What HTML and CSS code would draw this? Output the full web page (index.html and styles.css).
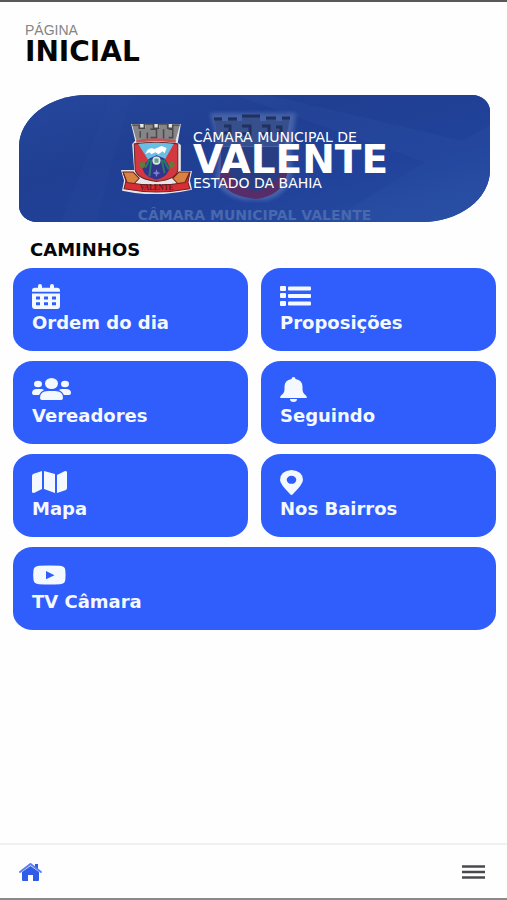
FILE: index.html
```html
<!DOCTYPE html>
<html lang="pt-BR">
<head>
<meta charset="utf-8">
<meta name="viewport" content="width=device-width, initial-scale=1">
<title>Câmara Municipal de Valente</title>
<link rel="stylesheet" href="styles.css">
</head>
<body>
<header class="page-head">
  <p class="eyebrow">PÁGINA</p>
  <h1 class="title">INICIAL</h1>
</header>
<main class="content">
  <section class="banner">
    <svg class="banner-art" viewBox="0 0 471 127" preserveAspectRatio="xMidYMid slice" aria-hidden="true">
      <defs>
        <linearGradient id="shade" x1="0" y1="0" x2="1" y2="1">
          <stop offset="0" stop-color="#25479c"/><stop offset=".35" stop-color="#203f92"/>
          <stop offset=".65" stop-color="#21429a"/><stop offset="1" stop-color="#284fa4"/>
        </linearGradient>
        <filter id="soft" x="-20%" y="-20%" width="140%" height="140%"><feGaussianBlur stdDeviation="2"/></filter>
      </defs>
      <rect width="471" height="127" fill="url(#shade)"/>
      <path d="M92 0 42 127H78L112 0z" fill="#3155a7" opacity=".12"/>
      <path d="M250 0 471 52V90L215 0zM310 127 400 70 471 30V127z" fill="#3b63b4" opacity=".12"/>
      <path d="M191 18h86l-5 35 1 24q-3 22-25 28h-22q-24-4-29-21l3-31z" fill="#8da4d5" opacity=".35" filter="url(#soft)"/>
      <path d="M195 22h8v4h6v-4h9v4h5v-6h18v6h6v-4h10v4h6v-4h8l-5 29h-66z" fill="#37508d"/>
      <path d="M195 24h8m6 0h9m5-3h18m6 2h10m6 0h8M205 31h6v7h-6m18-7h8v8h-8m20-8h7v8h-7m14-7h5v6h-5" fill="none" stroke="#1f315f" stroke-width="3"/>
      <path d="M202 52h66v27q-6 19-32 23-26-4-34-23z" fill="#293d83"/>
      <path d="M202 64q13 29 35 32 26-3 31-41v24q-5 22-31 25-29-3-36-19z" fill="#562d68"/>
    </svg>
    <div class="brand">
      <svg class="crest" viewBox="1 2 71 68" preserveAspectRatio="none" role="img" aria-label="Brasão de Valente">
        <path d="M11 3 60 3 57 21 60 23V48H71L69 57 71 66Q36 74 2 67L4 57 1 47H14L12 22 15 19z" fill="#e8e5e9"/>
        <path d="M12 4h8v3h5V3h9v4h5V3h9v4h4V4h7l-4 14H16z" fill="#858487"/>
        <path d="M12 4h7v3h5V3h9v4h5V3h9v4h5V4h7M20 10v6m7-5v6m3-9h6v8h-6m13-8v9m5-9h4v8h-4" fill="none" stroke="#4b494c" stroke-width="1.5"/>
        <path d="M16 18q20-3 39 0v3q-19-3-39 0z" fill="#c55355"/>
        <path d="M14 22q22-3 43 0v25q-1 9-21 11-19-2-21-11z" fill="#d3373f" stroke="#60292c"/>
        <path d="M18 22q18-2 35 0L43 39H29z" fill="#69bee3"/>
        <path d="M27 28q3-3 7-1l7-3 5 2-2 5-2-2-4 3-3-2-4 2-2-2-4 2z" fill="#fff"/>
        <path d="m29 36 7-3 8 3 5 8q-1 10-13 12-13-2-14-12z" fill="#31368c"/>
        <path d="m29 37-4 8m6-8-2 16m14-16 5 9m-7-9 3 13" stroke="#277a67" stroke-width="2"/>
        <circle cx="36" cy="38" r="4" fill="#d4eee0"/><path d="M34 36h4v4h-4z" fill="#6a9f8d"/>
        <circle cx="22" cy="42" r="3" fill="#64793c"/><circle cx="51" cy="42" r="3" fill="#64793c"/>
        <path d="m36 46 1 3 3 1-3 1-1 3-1-3-3-1 3-1z" fill="#7c7fce"/>
        <path d="M3 49h10l6 6-5 5H7zM69 49H58l-6 6 5 5h7z" fill="#d88440" stroke="#672323"/>
        <path d="M3 49 7 59Q36 64 64 59L69 49 67 59 69 65Q36 71 4 65L6 57z" fill="#d72d35" stroke="#722124"/>
        <text class="crest-name" x="36" y="66" text-anchor="middle">VALENTE</text>
      </svg>
      <div class="brand-text">
        <p class="brand-line">CÂMARA MUNICIPAL DE</p>
        <p class="brand-name">VALENTE</p>
        <p class="brand-line">ESTADO DA BAHIA</p>
      </div>
    </div>
    <p class="banner-caption">CÂMARA MUNICIPAL VALENTE</p>
  </section>
  <h2 class="section-title">CAMINHOS</h2>
  <nav class="tiles" aria-label="Caminhos">
    <a class="tile" href="#ordem">
      <span class="tile-icon"><svg width="28" height="25" viewBox="0 0 28 26" preserveAspectRatio="none"><path fill-rule="evenodd" d="M8 0q2 0 2 2v2h8V2q0-2 2-2t2 2v2h3q3 0 3 3v1H0V7q0-3 3-3h3V2q0-2 2-2zM0 10h28v13q0 3-3 3H3q-3 0-3-3zm4 3v3h4v-3zm8 0v3h4v-3zm8 0v3h4v-3zM4 19v3h4v-3zm8 0v3h4v-3zm8 0v3h4v-3z"/></svg></span>
      <span class="tile-label">Ordem do dia</span>
    </a>
    <a class="tile" href="#proposicoes">
      <span class="tile-icon"><svg width="31" height="22" viewBox="0 0 31 22"><rect y="1" width="6" height="5" rx="1"/><rect y="8" width="6" height="5" rx="1"/><rect y="16" width="6" height="5" rx="1"/><rect x="8" y="1.500" width="23" height="4" rx="1"/><rect x="8" y="9" width="23" height="4" rx="1"/><rect x="8" y="16.500" width="23" height="4" rx="1"/></svg></span>
      <span class="tile-label">Proposições</span>
    </a>
    <a class="tile" href="#vereadores">
      <span class="tile-icon"><svg width="39" height="22" viewBox="0 0 39 22"><ellipse cx="19.500" cy="5.500" rx="6.500" ry="5.500"/><ellipse cx="6" cy="6" rx="4" ry="3.300"/><ellipse cx="33" cy="6" rx="4" ry="3.300"/><path d="M8 20q0-7 8-7h7q8 0 8 7 0 2-2 2H10q-2 0-2-2zM0 15q0-4 5-4h4q2 0 3 1-4 2-5 5H2q-2 0-2-2zM39 15q0-4-5-4h-4q-2 0-3 1 4 2 5 5h5q2 0 2-2z"/></svg></span>
      <span class="tile-label">Vereadores</span>
    </a>
    <a class="tile" href="#seguindo">
      <span class="tile-icon"><svg width="27" height="25" viewBox="0 0 27 25"><path d="M13.500 0q2 0 2 2 7 1 7 8v2q0 4 3 6 2 2 1 3H.5q-1-1 1-3 3-2 3-6v-2q0-7 7-8 0-2 2-2zM10 22h7q0 3-3.500 3T10 22z"/></svg></span>
      <span class="tile-label">Seguindo</span>
    </a>
    <a class="tile" href="#mapa">
      <span class="tile-icon"><svg width="35" height="22" viewBox="0 0 35 22"><path d="M10 0v18L2 22q-2 0-2-1V5q0-1 1-2zM12 0l11 3v19l-11-4zM25 4l8-4q2 0 2 1v16q0 1-1 2l-9 3z"/></svg></span>
      <span class="tile-label">Mapa</span>
    </a>
    <a class="tile" href="#bairros">
      <span class="tile-icon"><svg width="23" height="25" viewBox="0 0 23 25"><path fill-rule="evenodd" d="M11.500 0Q23 1 23 10q0 4-10 14-1.500 2-3 0Q0 14 0 10 0 1 11.500 0zm0 5.800a4.800 4 0 1 0 0 8 4.800 4 0 1 0 0-8z"/></svg></span>
      <span class="tile-label">Nos Bairros</span>
    </a>
    <a class="tile tile-wide" href="#tv">
      <span class="tile-icon"><svg width="34" height="20" viewBox="0 0 34 20"><path fill-rule="evenodd" d="M7 .8Q17 0 28 .8q5 .4 5.300 4.200.5 5 0 10-.3 3.800-5.300 4.200-11 .8-21 0Q2 18.800 1.500 15 .8 10 1.500 5 2 1.200 7 .8zM14 6v8.300l8.500-4.100z"/></svg></span>
      <span class="tile-label">TV Câmara</span>
    </a>
  </nav>
</main>
<footer class="tabbar">
  <a class="tab" href="#inicio" aria-label="Início"><svg width="23" height="18" viewBox="0 0 23 18"><path d="m3 9 8.500-6L20 9v8q0 1-1 1h-5v-6H9v6H4q-1 0-1-1z" fill="#2f5de8"/><path d="M16 1h3v6l-3-3z" fill="#2f5de8"/><path d="m1 9 10.500-8L22 9" fill="none" stroke="#5b7ff0" stroke-width="2" stroke-linecap="round"/></svg></a>
  <button class="tab" type="button" aria-label="Menu"><svg width="23" height="14" viewBox="0 0 23 14"><path d="M0 1.500h23M0 7h23M0 12.500h23" stroke="#4b494d" stroke-width="2.400"/></svg></button>
</footer>
</body>
</html>
```
FILE: styles.css
```css
* { box-sizing: border-box; }

body {
  display: flex;
  flex-direction: column;
  min-height: 100vh;
  margin: 0;
  border-top: 2px solid #59575a;
  border-bottom: 2px solid #8a8a8a;
  background: #fefefe;
  color: #050505;
  font-family: "DejaVu Sans", sans-serif;
}

p, h1, h2 { margin: 0; }

a { color: inherit; text-decoration: none; }

.page-head { padding: 20px 25px 0; }

.eyebrow {
  color: #858585;
  font: 14px/16px "Liberation Sans", sans-serif;
}

.title {
  font-size: 28px;
  line-height: 28px;
}

.content {
  flex: 1;
  padding: 29px 11px 24px 13px;
}

.banner {
  position: relative;
  display: flex;
  flex-direction: column;
  align-items: center;
  height: 127px;
  margin: 0 6px;
  padding-top: 28px;
  overflow: hidden;
  border-radius: 68px 18px 68px 18px / 52px 16px 52px 16px;
  background: #21429a;
  color: #fff;
}

.banner-art {
  position: absolute;
  inset: 0;
  width: 100%;
  height: 100%;
}

.brand {
  position: relative;
  display: flex;
  height: 87px;
}

.crest {
  width: 72px;
  height: 71px;
}

.crest-name {
  fill: #621b20;
  font: bold 7px "Liberation Serif", serif;
}

.brand-text { padding-top: 6px; }

.brand-line {
  font-size: 14px;
  line-height: 16px;
}

.brand-name {
  font-size: 39px;
  font-weight: bold;
  line-height: 30px;
}

.banner-caption {
  position: relative;
  color: #4a68ae;
  font-size: 14px;
  font-weight: bold;
  line-height: 14px;
}

.section-title {
  padding: 16px 17px 6px;
  font-size: 18px;
  line-height: 24px;
}

.tiles {
  display: grid;
  grid-template-columns: 1fr 1fr;
  gap: 10px 13px;
}

.tile {
  display: flex;
  flex-direction: column;
  min-height: 83px;
  padding: 14px 19px;
  border-radius: 20px / 18px;
  background: #2f5efc;
  color: #f4f8ff;
}

.tile-wide { grid-column: 1 / -1; }

.tile-icon {
  display: flex;
  align-items: center;
  height: 28px;
  fill: currentColor;
}

.tile-label {
  font-size: 18px;
  font-weight: bold;
  line-height: 26px;
}

.tabbar {
  display: flex;
  align-items: center;
  justify-content: space-between;
  height: 55px;
  padding: 0 22px 0 19px;
  border-top: 2px solid #f0f0f0;
}

.tab {
  display: flex;
  padding: 0;
  border: 0;
  background: none;
}
```
